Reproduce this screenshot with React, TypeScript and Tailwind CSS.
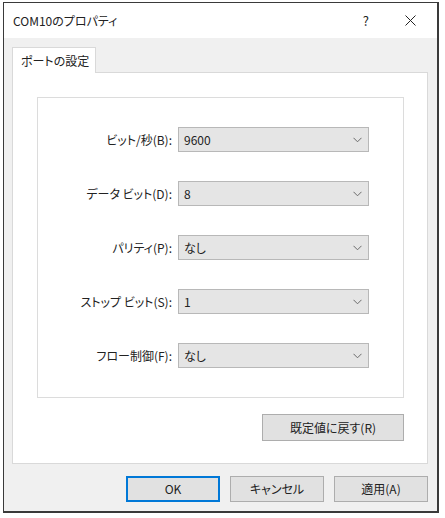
import React from 'react';

const fields = [
    { label: 'ビット/秒(B):', value: '9600' },
    { label: 'データ ビット(D):', value: '8' },
    { label: 'パリティ(P):', value: 'なし' },
    { label: 'ストップ ビット(S):', value: '1' },
    { label: 'フロー制御(F):', value: 'なし' },
];

const Chevron: React.FC = () => (
    <svg width="9" height="6" viewBox="0 0 9 6" className="shrink-0">
        <path d="M0.5 0.8 L4.5 4.8 L8.5 0.8" fill="none" stroke="#6b6b6b" strokeWidth="1" />
    </svg>
);

const Combo: React.FC<{ value: string }> = ({ value }) => (
    <div className="w-[191px] h-[25px] bg-[#e5e5e5] border border-[#b8b8b8] flex items-center justify-between pl-[5px] pr-[6px]">
        <span>{value}</span>
        <Chevron />
    </div>
);

const App: React.FC = () => {
    return (
        <div className="w-[445px] h-[518px] bg-white pt-[2px] pl-[3px] text-[12px] text-[#222] [font-feature-settings:'palt']" style={{ fontFamily: '"Noto Sans CJK JP", "Noto Sans", sans-serif' }}>
            <div className="w-[436px] h-[511px] border border-[#3a3a3a] border-r-2 border-b-2 flex flex-col">
                {/* title bar */}
                <div className="h-[35px] bg-white flex items-center pl-[9px]">
                    <span>COM10のプロパティ</span>
                    <span className="ml-auto mr-[36px] text-[13px]">?</span>
                    <svg width="11" height="11" viewBox="0 0 11 11" className="mr-[21px]">
                        <path d="M0.5 0.5 L10.5 10.5 M10.5 0.5 L0.5 10.5" stroke="#222" strokeWidth="1" />
                    </svg>
                </div>

                <div className="flex-1 bg-[#f0f0f0] pt-[9px] pl-[8px] pr-[9px] flex flex-col">
                    {/* tab */}
                    <div className="w-[84px] h-[26px] bg-white border border-b-0 border-[#d9d9d9] -mb-px relative z-10 flex items-center pl-[8px]">
                        ポートの設定
                    </div>
                    <div className="w-[416px] h-[392px] bg-white border border-[#d9d9d9] pt-[24px] pl-[24px] flex flex-col">
                        <div className="w-[367px] h-[301px] border border-[#dcdcdc] pt-[29px] flex flex-col gap-[29px]">
                            {fields.map(f => (
                                <div key={f.label} className="flex items-center">
                                    <span className="w-[140px] text-right pr-[6px]">{f.label}</span>
                                    <Combo value={f.value} />
                                </div>
                            ))}
                        </div>
                        <div className="w-[367px] flex justify-end mt-[16px]">
                            <button className="w-[142px] h-[27px] bg-[#e1e1e1] border border-[#adadad]">既定値に戻す(R)</button>
                        </div>
                    </div>

                    <div className="flex justify-end gap-[10px] mt-[12px]">
                        <button className="w-[94px] h-[26px] bg-[#e1e1e1] border-2 border-[#0078d7]">OK</button>
                        <button className="w-[94px] h-[26px] bg-[#e1e1e1] border border-[#adadad]">キャンセル</button>
                        <button className="w-[94px] h-[26px] bg-[#e1e1e1] border border-[#adadad]">適用(A)</button>
                    </div>
                </div>
            </div>
        </div>
    );
};

export default App;
